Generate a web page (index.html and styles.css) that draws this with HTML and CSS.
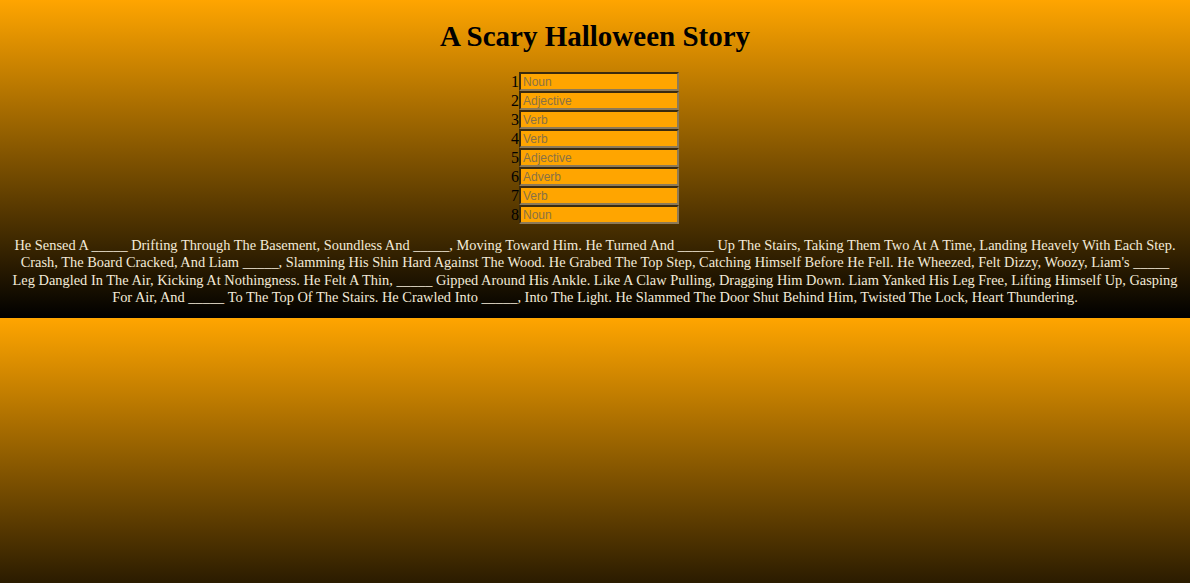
FILE: index.html
```html
<!DOCTYPE html>
<html>
<head>
<meta charset="utf-8">
<title>A Scary Halloween Story</title>
<link rel="stylesheet" href="styles.css">
</head>
<body>
<h1 class="title">A Scary Halloween Story</h1>
<div class="fields">
<div class="field">1<input class="word" type="text" placeholder="Noun"></div>
<div class="field">2<input class="word" type="text" placeholder="Adjective"></div>
<div class="field">3<input class="word" type="text" placeholder="Verb"></div>
<div class="field">4<input class="word" type="text" placeholder="Verb"></div>
<div class="field">5<input class="word" type="text" placeholder="Adjective"></div>
<div class="field">6<input class="word" type="text" placeholder="Adverb"></div>
<div class="field">7<input class="word" type="text" placeholder="Verb"></div>
<div class="field">8<input class="word" type="text" placeholder="Noun"></div>
</div>
<p class="story">He Sensed A _____ Drifting Through The Basement, Soundless And _____, Moving Toward Him. He Turned And _____ Up The Stairs, Taking Them Two At A Time, Landing Heavely With Each Step. Crash, The Board Cracked, And Liam _____, Slamming His Shin Hard Against The Wood. He Grabed The Top Step, Catching Himself Before He Fell. He Wheezed, Felt Dizzy, Woozy, Liam's _____ Leg Dangled In The Air, Kicking At Nothingness. He Felt A Thin, _____ Gipped Around His Ankle. Like A Claw Pulling, Dragging Him Down. Liam Yanked His Leg Free, Lifting Himself Up, Gasping For Air, And _____ To The Top Of The Stairs. He Crawled Into _____, Into The Light. He Slammed The Door Shut Behind Him, Twisted The Lock, Heart Thundering.</p>
</body>
</html>
```
FILE: styles.css
```css
body {
  margin: 8px;
  background: linear-gradient(#ffa500, #000000);
  font-family: "Liberation Serif", "Times New Roman", serif;
  text-align: center;
  color: #000;
}
.title {
  font-size: 29px;
  margin: 12px 0 20px;
  line-height: 32px;
}
.fields {
  font-size: 16px;
}
.field {
  height: 19px;
  display: flex;
  justify-content: center;
  align-items: center;
  line-height: 19px;
}
.word {
  box-sizing: border-box;
  width: 160px;
  height: 19px;
  margin: 0;
  padding: 0 2px;
  background: #ffa500;
  border: 2px solid;
  border-color: #3a2a0e #8d7a58 #8d7a58 #3a2a0e;
  font-family: "Liberation Sans", Arial, sans-serif;
  font-size: 12px;
}
.word::placeholder {
  color: #8a7245;
}
.story {
  font-size: 14.4px;
  line-height: 17.3px;
  color: #f3ead8;
  margin: 13px 0 4px;
}
```
